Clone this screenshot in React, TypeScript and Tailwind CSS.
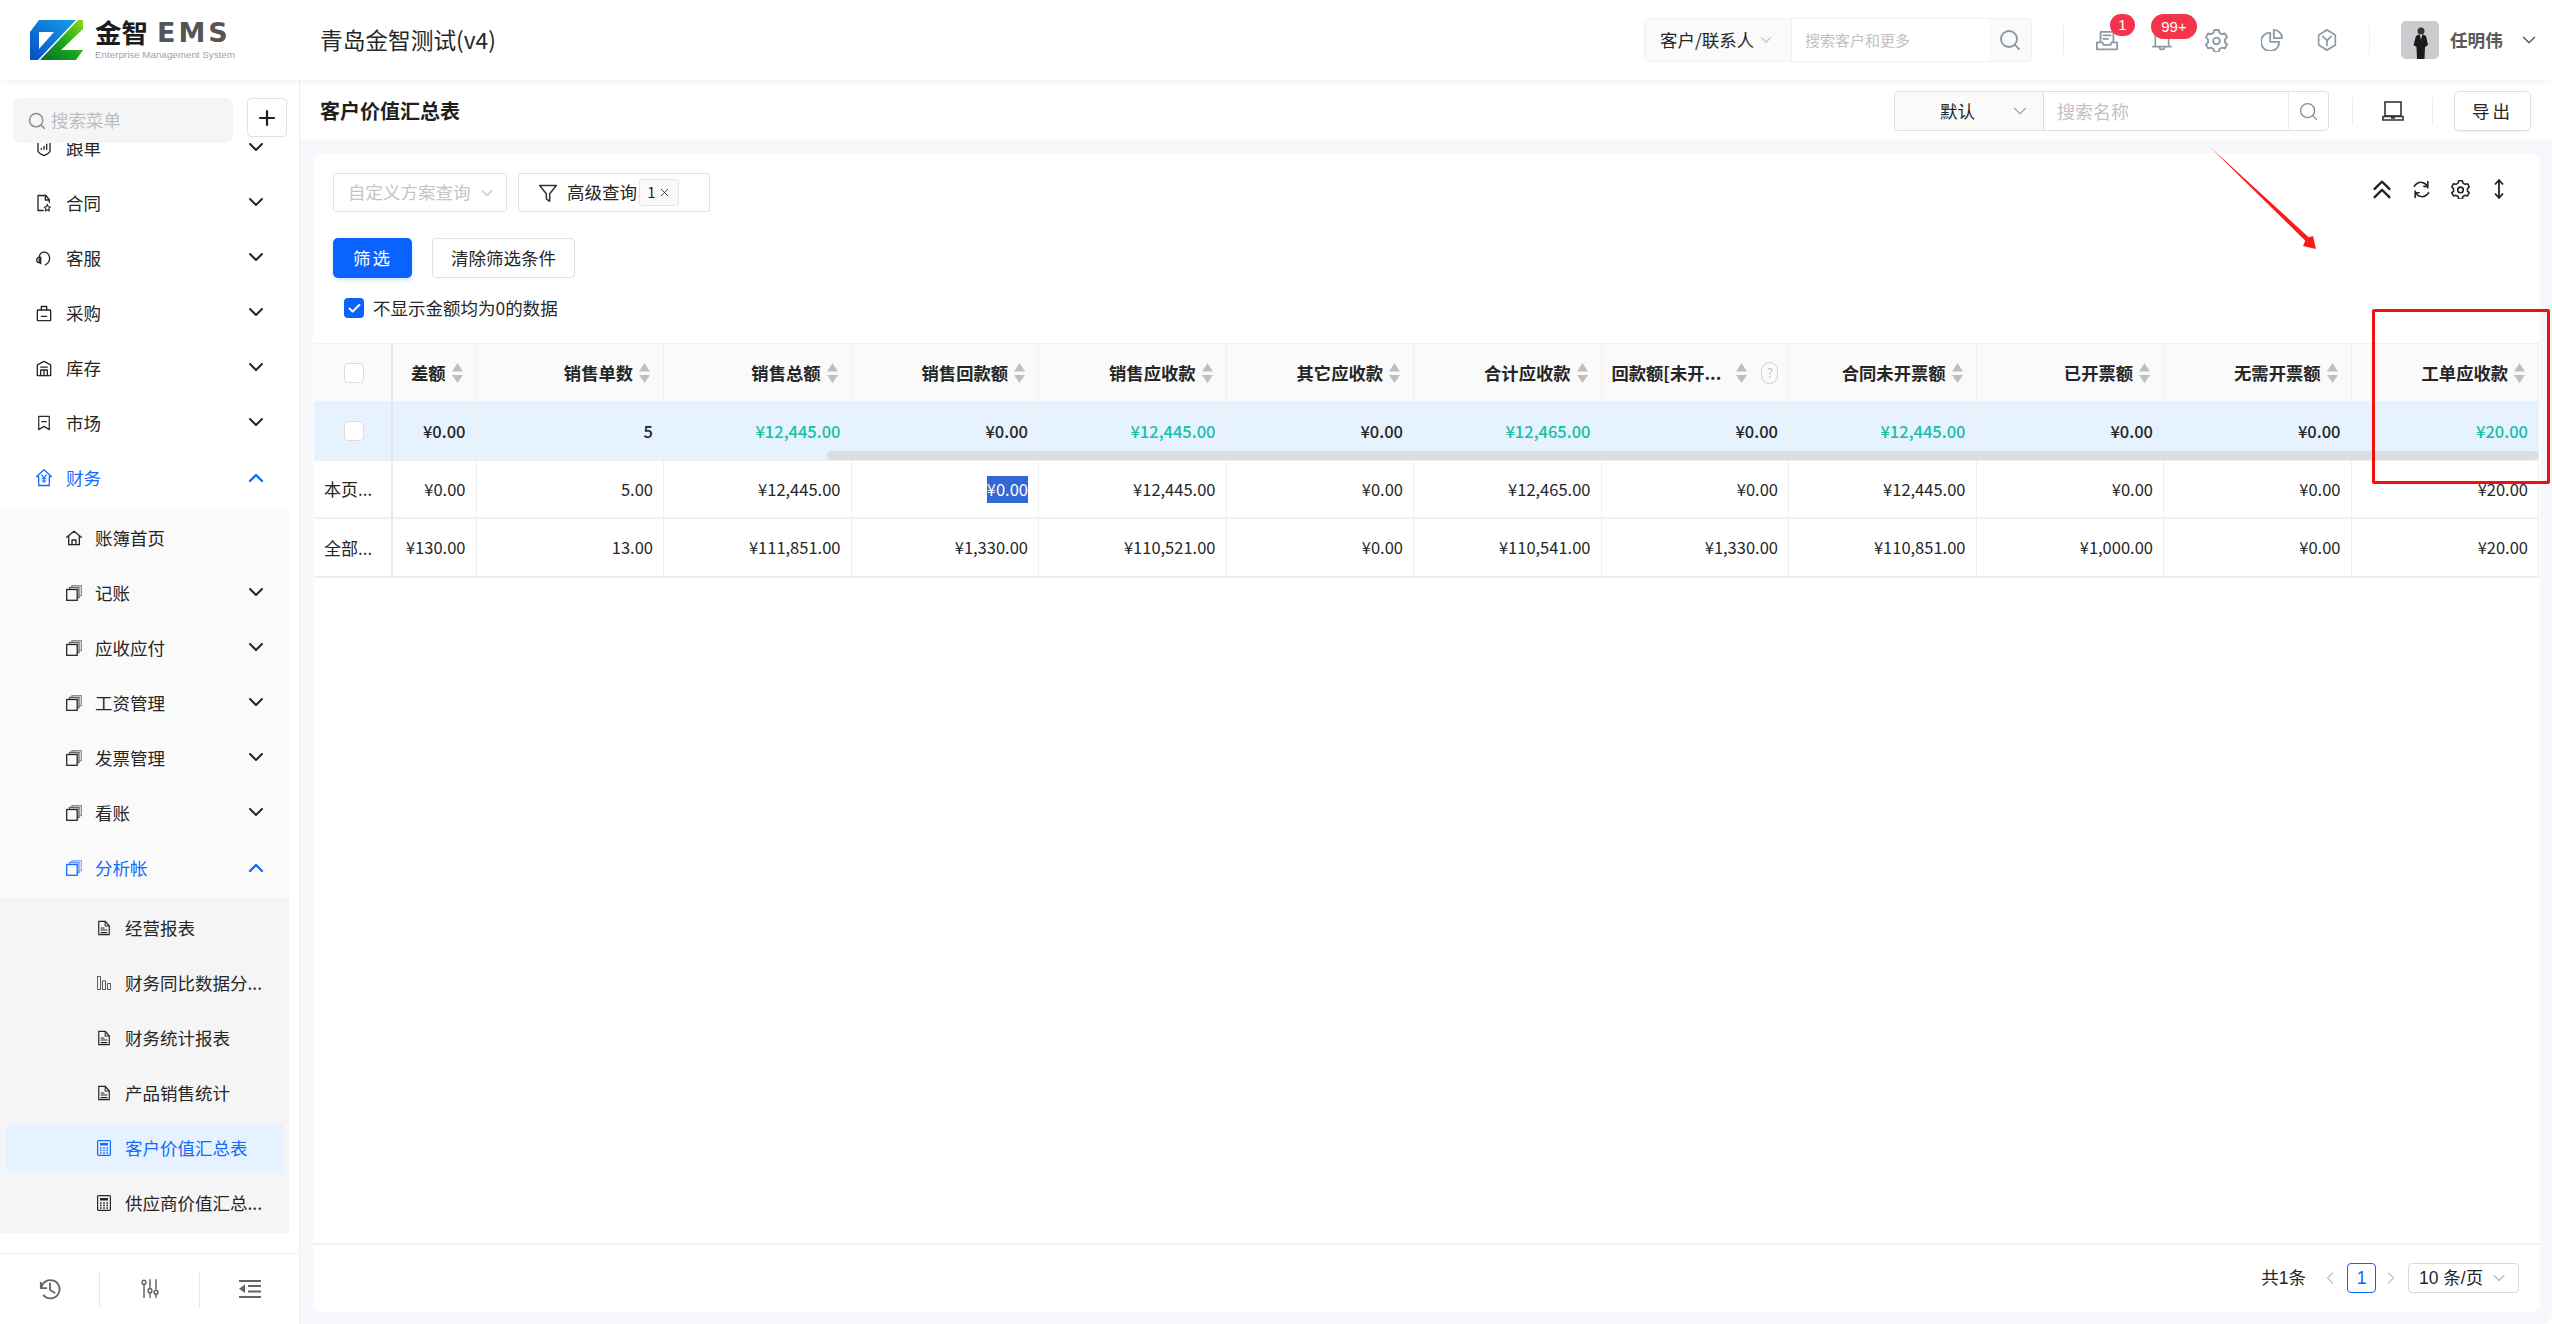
import { ChevronDown, ChevronUp, ChevronLeft, ChevronRight, Search, Plus, X, Check } from "lucide-react";
import type { ReactNode } from "react";

const cjk = "font-['Noto_Sans_CJK_SC','Noto_Sans',sans-serif]";
const rowGrid = "grid grid-cols-[79px_83.5px_repeat(11,187.5px)]";

const Svg = ({ w, h, className, children }: { w: number; h: number; className?: string; children: ReactNode }) => (
  <svg
    width={w}
    height={h}
    viewBox="0 0 24 24"
    fill="none"
    stroke="currentColor"
    strokeWidth="2"
    strokeLinecap="round"
    strokeLinejoin="round"
    preserveAspectRatio="none"
    className={className}
  >
    {children}
  </svg>
);

const TrackIcon = () => (
  <Svg w={16} h={17}>
    <path d="M3 3h18v12c0 3-5 5-9 7-4-2-9-4-9-7z" />
    <path d="M8 13v-1M12 13V9M16 13V6" />
  </Svg>
);
const ContractIcon = () => (
  <Svg w={16} h={18}>
    <path d="M11 22H3V2h12l5 6v3" />
    <path d="M14 2v6h6" />
    <path d="M17 14l1.5 3 3 .5-2.2 2 .6 3-2.9-1.500-2.900 1.500.6-3-2.200-2 3-.5z" strokeWidth="1.600" />
  </Svg>
);
const ServiceIcon = () => (
  <Svg w={16} h={17}>
    <path d="M7 19C3 14 4 3 12 3s10 8 7 14c-1 2-3 3-5 4" />
    <path d="M7 10C3 10 1 12 1 14s2 4 6 4z" />
  </Svg>
);
const BagIcon = () => (
  <Svg w={16} h={17}>
    <rect x="2" y="7" width="20" height="15" rx="1" />
    <path d="M8 7V2h8v5M8 16h8" />
  </Svg>
);
const StoreIcon = () => (
  <Svg w={16} h={17}>
    <path d="M2 22V7l10-5 10 5v15z" />
    <path d="M7 10h10M7 22v-8h10v8M12 14v8" />
  </Svg>
);
const MarketIcon = () => (
  <Svg w={14} h={16}>
    <path d="M3 2h18v20l-9-5-9 5z" />
    <path d="M8 10h8" />
  </Svg>
);
const YenHouseIcon = () => (
  <Svg w={16} h={18}>
    <path d="M1 10L12 1l11 9h-3v12H4V10z" />
    <path d="M8.500 8l3.500 4 3.500-4M12 12v6M9 13h6M9 16h6" strokeWidth="1.600" />
  </Svg>
);
const HomeIcon = () => (
  <Svg w={16} h={16}>
    <path d="M1 11L12 2l11 9M4 9v13h16V9" />
    <path d="M9 22v-7h6v7" />
  </Svg>
);
const StackIcon = () => (
  <svg width={16} height={16} viewBox="0 0 16 16" fill="none" stroke="currentColor" strokeWidth="1.300">
    <rect x="0.700" y="4.500" width="10.500" height="10.800" />
    <path d="M3.500 4V2.500H13v10h-1.500" opacity="0.7" />
    <path d="M6 2V.7h9.300v10H13.500" opacity="0.5" />
  </svg>
);
const ReportIcon = () => (
  <Svg w={14} h={16}>
    <path d="M3 2h11l7 7v13H3z" />
    <path d="M14 2v7h7M7 12h5M7 15h10M7 19h10" strokeWidth="1.800" />
  </Svg>
);
const BarsIcon = () => (
  <svg width={16} height={16} viewBox="0 0 16 16" fill="none" stroke="currentColor" strokeWidth="1.100" opacity="0.75">
    <rect x="0.600" y="0.600" width="3.400" height="14.800" />
    <rect x="6.300" y="5.600" width="3.400" height="9.800" />
    <rect x="12" y="8.600" width="3.400" height="6.800" />
  </svg>
);
const CalcIcon = () => (
  <svg width={14} height={16} viewBox="0 0 14 16" fill="none" stroke="currentColor" strokeWidth="1.200">
    <rect x="0.600" y="0.600" width="12.800" height="14.800" rx="1" />
    <rect x="3" y="3" width="8" height="2.500" fill="currentColor" stroke="none" />
    <path d="M3 8h1.600M6.200 8h1.600M9.400 8H11M3 10.500h1.600M6.200 10.500h1.600M9.400 10.500H11M3 13h1.600M6.200 13h1.600M9.400 13H11" strokeWidth="1.400" />
  </svg>
);
const Logo = () => (
  <svg width={53} height={40} viewBox="0 0 53 40">
    <defs>
      <linearGradient id="lb" x1="0" y1="1" x2="1" y2="0">
        <stop offset="0" stopColor="#0a4fc4" />
        <stop offset="1" stopColor="#12a0e8" />
      </linearGradient>
      <linearGradient id="lg" x1="0" y1="1" x2="1" y2="0">
        <stop offset="0" stopColor="#066b2a" />
        <stop offset="0.500" stopColor="#19a81f" />
        <stop offset="1" stopColor="#8fd51e" />
      </linearGradient>
    </defs>
    <path d="M9 0h37L8 40H0V12z" fill="url(#lb)" />
    <path d="M9 12h15L9 29z" fill="#fff" />
    <path d="M53 0v9L31 30h22l-7 10H10L48 0z" fill="url(#lg)" />
  </svg>
);

const SortIcon = () => (
  <svg width={11} height={22} viewBox="0 0 11 22" className="shrink-0">
    <path d="M5.500 1L11 9.500H0z" fill="#bfbfbf" />
    <path d="M5.500 21L0 13h11z" fill="#bfbfbf" />
  </svg>
);

const GearPath = () => (
  <>
    <path d="M9.700 2h4.600l.8 3 2.700 1.500 3-.8 2.200 4-2.200 2.300v3l2.200 2.200-2.200 4-3-.8-2.700 1.500-.8 3H9.700l-.8-3-2.700-1.500-3 .8-2.200-4L3.200 15v-3L1 9.700l2.200-4 3 .8L8.900 5z" transform="translate(0 -1)" />
    <circle cx="12" cy="12.500" r="3.500" />
  </>
);

type SubItem = { label: string; icon: ReactNode; active?: boolean };

const topItems = [
  { label: "跟单", icon: <TrackIcon /> },
  { label: "合同", icon: <ContractIcon /> },
  { label: "客服", icon: <ServiceIcon /> },
  { label: "采购", icon: <BagIcon /> },
  { label: "库存", icon: <StoreIcon /> },
  { label: "市场", icon: <MarketIcon /> },
];

const financeItems = ["记账", "应收应付", "工资管理", "发票管理", "看账"];

const reportItems: SubItem[] = [
  { label: "经营报表", icon: <ReportIcon /> },
  { label: "财务同比数据分...", icon: <BarsIcon /> },
  { label: "财务统计报表", icon: <ReportIcon /> },
  { label: "产品销售统计", icon: <ReportIcon /> },
  { label: "客户价值汇总表", icon: <CalcIcon />, active: true },
  { label: "供应商价值汇总...", icon: <CalcIcon /> },
];

const columns = [
  "差额",
  "销售单数",
  "销售总额",
  "销售回款额",
  "销售应收款",
  "其它应收款",
  "合计应收款",
  "回款额[未开...",
  "合同未开票额",
  "已开票额",
  "无需开票额",
  "工单应收款",
];

const row1 = ["¥0.00", "5", "¥12,445.00", "¥0.00", "¥12,445.00", "¥0.00", "¥12,465.00", "¥0.00", "¥12,445.00", "¥0.00", "¥0.00", "¥20.00"];
const green = [2, 4, 6, 8, 11];
const row2 = ["¥0.00", "5.00", "¥12,445.00", "¥0.00", "¥12,445.00", "¥0.00", "¥12,465.00", "¥0.00", "¥12,445.00", "¥0.00", "¥0.00", "¥20.00"];
const row3 = ["¥130.00", "13.00", "¥111,851.00", "¥1,330.00", "¥110,521.00", "¥0.00", "¥110,541.00", "¥1,330.00", "¥110,851.00", "¥1,000.00", "¥0.00", "¥20.00"];

const Box = () => <div className="w-[20px] h-[20px] rounded-[4px] bg-white border border-[#dcdcdc]" />;

const TopBar = () => (
  <header className="h-[80px] shrink-0 bg-white flex items-center pr-[15px] shadow-[0_2px_5px_rgba(0,0,0,0.05)] relative z-10">
    <div className="w-[320px] shrink-0 pl-[30px] flex items-center gap-[12px]">
      <Logo />
      <div className="flex flex-col">
        <div className="flex items-center h-[26px] text-[26.500px] font-bold leading-none whitespace-nowrap">
          <span className="text-[#1c1c1c]">金智</span>
          <span className="text-[#555] ml-[9px] font-['DejaVu_Sans',sans-serif] text-[27px] tracking-[3px]">EMS</span>
        </div>
        <span className="text-[9.800px] leading-[12px] mt-[4px] text-[#a3a3a3] whitespace-nowrap font-['Liberation_Sans',sans-serif]">
          Enterprise Management System
        </span>
      </div>
    </div>
    <div className="text-[22.700px] text-[#262626]">青岛金智测试(v4)</div>

    <div className="ml-auto flex items-center">
      <div className="flex h-[44px] w-[388px] border border-[#f0f0f0] rounded-[3px] overflow-hidden">
        <div className="w-[147px] bg-[#fafafa] border-r border-[#f0f0f0] flex items-center pl-[15px] text-[17.500px] text-[#262626]">
          <span>客户/联系人</span>
          <ChevronDown size={18} strokeWidth={1.500} className="ml-[3px] text-[#c4c4c4]" />
        </div>
        <div className="flex-1 flex items-center pl-[13px] text-[15px] text-[#c2c2c2]">搜索客户和更多</div>
        <div className="w-[42px] bg-[#fafafa] flex items-center justify-center text-[#8a96a0]">
          <Search size={24} strokeWidth={1.800} />
        </div>
      </div>
      <div className="w-px h-[30px] bg-[#eeeeee] ml-[31px] mr-[15px]" />
      <div className="w-[55px] flex justify-center relative text-[#8e9ba6]">
        <Svg w={22} h={21}>
          <path d="M5 13V2h14v11" />
          <path d="M8 6h8M8 10h5" />
          <path d="M1 14h6l1 3h8l1-3h6v8H1z" />
        </Svg>
        <span className="absolute left-[31px] top-[-16px] w-[25px] h-[22px] rounded-full bg-[#f5334a] text-white text-[15px] leading-[22px] text-center font-['Liberation_Sans',sans-serif]">
          1
        </span>
      </div>
      <div className="w-[55px] flex justify-center relative text-[#8e9ba6]">
        <Svg w={20} h={21}>
          <path d="M4 18V6a8 5 0 0 1 16 0v12M1 19h22M9 20c0 3 6 3 6 0" />
        </Svg>
        <span className="absolute left-[17px] top-[-16px] w-[46px] h-[25px] rounded-full bg-[#f5334a] text-white text-[15px] leading-[25px] text-center font-['Liberation_Sans',sans-serif]">
          99+
        </span>
      </div>
      <div className="w-[55px] flex justify-center text-[#8e9ba6]">
        <svg width={23} height={23} viewBox="0 0 24 24" fill="none" stroke="currentColor" strokeWidth="2" strokeLinejoin="round">
          <GearPath />
        </svg>
      </div>
      <div className="w-[55px] flex justify-center text-[#8e9ba6]">
        <Svg w={22} h={22}>
          <path d="M10 4a10 10 0 1 0 10 10H10z" />
          <path d="M14 1a9 9 0 0 1 9 9h-9z" />
        </Svg>
      </div>
      <div className="w-[55px] flex justify-center text-[#8e9ba6]">
        <Svg w={20} h={22}>
          <path d="M12 1l10 5.500v11L12 23 2 17.500v-11z" />
          <path d="M7 8l5 4.500L17 8M12 12.500V18" />
        </Svg>
      </div>
      <div className="w-px h-[30px] bg-[#eeeeee] ml-[15px] mr-[31px]" />
      <svg width={38} height={38} viewBox="0 0 38 38" className="rounded-[5px] shrink-0">
        <rect width="38" height="38" fill="#c9cbcf" />
        <circle cx="20" cy="10" r="3.500" fill="#3a302c" />
        <path d="M15 15l3-1.500h4l3 1.500 2 9-3 2-.5 12H16l-.5-12-3-2z" fill="#1a1a1d" />
        <path d="M18.800 13.500h2.400l-1.200 5z" fill="#e8e8e8" />
      </svg>
      <span className="w-[53px] ml-[11px] text-[17.600px] font-bold text-[#595959] whitespace-nowrap">任明伟</span>
      <ChevronDown size={22} strokeWidth={1.500} className="ml-[15px] -mr-[3px] text-[#4a5a6a]" />
    </div>
  </header>
);

const Sidebar = () => (
  <aside className="w-[300px] shrink-0 bg-white border-r border-[#eeeff2] flex flex-col text-[17.500px] text-[#262626]">
    <div className="h-[63px] shrink-0 flex items-start pt-[18px] pl-[13px] relative z-[1]">
      <div className="w-[220px] h-[45px] rounded-[8px] bg-[#f4f5f7] flex items-center pl-[14px] gap-[4px] text-[#bdbdbd]">
        <Search size={20} strokeWidth={1.800} className="text-[#8f8f8f]" />
        <span>搜索菜单</span>
      </div>
      <div className="w-[40px] h-[39px] ml-[14px] rounded-[4px] border border-[#e2e2e2] flex items-center justify-center text-[#222]">
        <Plus size={24} strokeWidth={2.200} />
      </div>
    </div>
    <nav className="flex-1 min-h-0 overflow-hidden pr-[10px]">
      <div className="-mt-[22.500px]">
        {topItems.map((it) => (
          <div key={it.label} className="h-[55px] flex items-center pl-[36px] pr-[21px]">
            <span className="w-[16px] flex justify-center mr-[14px]">{it.icon}</span>
            <span className="flex-1">{it.label}</span>
            <ChevronDown size={24} strokeWidth={2} className="mb-[3px]" />
          </div>
        ))}
        <div className="h-[55px] flex items-center pl-[36px] pr-[21px] text-[#1469ff]">
          <span className="w-[16px] flex justify-center mr-[14px]">
            <YenHouseIcon />
          </span>
          <span className="flex-1">财务</span>
          <ChevronUp size={24} strokeWidth={2.400} />
        </div>
        <div className="bg-[#fafafa] mt-[2.500px] pt-[2.500px]">
          <div className="h-[55px] flex items-center pl-[66px]">
            <span className="w-[16px] mr-[13px]">
              <HomeIcon />
            </span>
            账簿首页
          </div>
          {financeItems.map((label) => (
            <div key={label} className="h-[55px] flex items-center pl-[66px] pr-[21px]">
              <span className="w-[16px] mr-[13px]">
                <StackIcon />
              </span>
              <span className="flex-1">{label}</span>
              <ChevronDown size={24} strokeWidth={2} className="mb-[3px]" />
            </div>
          ))}
          <div className="h-[55px] flex items-center pl-[66px] pr-[21px] text-[#1469ff]">
            <span className="w-[16px] mr-[13px]">
              <StackIcon />
            </span>
            <span className="flex-1">分析帐</span>
            <ChevronUp size={24} strokeWidth={2.400} />
          </div>
          <div className="bg-[#f5f5f5] py-[2.500px] mt-[2.500px]">
            {reportItems.map((it) => (
              <div key={it.label} className="h-[55px] py-[2.500px] px-[5px]">
                <div
                  className={
                    it.active
                      ? "h-[50px] rounded-[6px] bg-[#e6f2ff] text-[#1469ff] flex items-center pl-[92px]"
                      : "h-[50px] flex items-center pl-[92px]"
                  }
                >
                  <span className="w-[14px] mr-[14px] flex justify-center">{it.icon}</span>
                  <span className="whitespace-nowrap">{it.label}</span>
                </div>
              </div>
            ))}
          </div>
        </div>
      </div>
    </nav>
    <div className="h-[71px] shrink-0 border-t border-[#eeeeee] flex items-center text-[#666]">
      <div className="w-[100px] h-[37px] border-r border-[#e6e6e6] flex items-center justify-center">
        <Svg w={22} h={22}>
          <path d="M2 5v6h6" />
          <path d="M2.500 11A10 10 0 1 1 5 19" />
          <path d="M12 6v7l5 3" />
        </Svg>
      </div>
      <div className="w-[100px] h-[37px] border-r border-[#e6e6e6] flex items-center justify-center">
        <Svg w={18} h={20}>
          <path d="M4 7v15M12 1v9M12 17v5M20 1v11M20 19v3" />
          <circle cx="4" cy="4" r="2.500" />
          <circle cx="12" cy="14" r="2.500" />
          <circle cx="20" cy="16" r="2.500" />
        </Svg>
      </div>
      <div className="w-[99px] flex items-center justify-center">
        <svg width={22} height={18} viewBox="0 0 22 18" fill="currentColor">
          <rect x="0" y="0" width="22" height="2" />
          <rect x="9" y="5" width="13" height="2" />
          <rect x="9" y="10.500" width="13" height="2" />
          <rect x="0" y="16" width="22" height="2" />
          <path d="M0 8.700L6 4.500v8.500z" />
        </svg>
      </div>
    </div>
  </aside>
);

const DataTable = () => (
  <div className="relative w-[2225px] mx-[1px] text-[16.500px] text-[#262626]">
    <div className={`${rowGrid} h-[59px] bg-[#fafafa] border-t border-b border-[#f0f0f0] font-bold text-[17.300px]`}>
      <div className="flex items-center justify-center border-r-2 border-[#e8e8e8] pl-[2px]">
        <Box />
      </div>
      {columns.map((c, i) => (
        <div
          key={c}
          className={
            i === 7
              ? "flex items-center pl-[10px] border-r border-[#f0f0f0]"
              : "flex items-center justify-end pr-[13px] gap-[6px] border-r border-[#f0f0f0]"
          }
        >
          <span className="whitespace-nowrap">{c}</span>
          {i === 7 ? (
            <>
              <span className="ml-[15px]">
                <SortIcon />
              </span>
              <span className="ml-[14px] w-[17px] h-[22px] rounded-full border border-[#cfcfcf] text-[#bfbfbf] text-[13px] leading-[20px] text-center font-normal">
                ?
              </span>
            </>
          ) : (
            <SortIcon />
          )}
        </div>
      ))}
    </div>
    <div className={`${rowGrid} h-[59px] bg-[#e6f2fd] border-b border-[#f0f0f0] font-medium`}>
      <div className="flex items-center justify-center border-r-2 border-[#e0e6ec] pl-[2px]">
        <Box />
      </div>
      {row1.map((v, i) => (
        <div key={i} className="flex items-center justify-end pr-[10px] border-r border-[#eef2f6]">
          <span className={green.includes(i) ? "text-[#17bfa8]" : ""}>{v}</span>
        </div>
      ))}
    </div>
    <div className={`${rowGrid} h-[58px] border-b-2 border-[#f0f0f0]`}>
      <div className="flex items-center pl-[10px] text-[17px] border-r-2 border-[#e8e8e8]">本页...</div>
      {row2.map((v, i) => (
        <div key={i} className="flex items-center justify-end pr-[10px] border-r border-[#f0f0f0]">
          <span className={i === 3 ? "bg-[#3367d6] text-white leading-[27px]" : ""}>{v}</span>
        </div>
      ))}
    </div>
    <div className={`${rowGrid} h-[59px] border-b-2 border-[#f0f0f0]`}>
      <div className="flex items-center pl-[10px] text-[17px] border-r-2 border-[#e8e8e8]">全部...</div>
      {row3.map((v, i) => (
        <div key={i} className="flex items-center justify-end pr-[10px] border-r border-[#f0f0f0]">
          {v}
        </div>
      ))}
    </div>
    <div className="absolute left-[513px] right-0 top-[108px] h-[9px] rounded-full bg-[#dedede]" />
  </div>
);

const Main = () => (
  <main className="flex-1 min-w-0 flex flex-col bg-[#f7f8fc]">
    <div className="h-[60px] shrink-0 bg-white flex items-center pl-[20px] pr-[21px] pt-[2px]">
      <div className="text-[20px] font-bold text-[#1f1f1f]">客户价值汇总表</div>
      <div className="ml-auto flex items-center">
        <div className="flex h-[40px] w-[435px] border border-[#dedede] rounded-[4px] overflow-hidden">
          <div className="w-[149px] bg-[#fafafa] border-r border-[#dedede] flex items-center pl-[45px] text-[17.500px] text-[#262626]">
            <span>默认</span>
            <ChevronDown size={22} strokeWidth={1.300} className="ml-[34px] text-[#a8a8a8]" />
          </div>
          <div className="w-[245px] flex items-center pl-[13px] text-[18px] text-[#c2c2c2] border-r border-[#ececec]">搜索名称</div>
          <div className="flex-1 flex items-center justify-center text-[#8c8c8c]">
            <Search size={21} strokeWidth={1.500} />
          </div>
        </div>
        <div className="w-px h-[28px] bg-[#eeeeee] ml-[23px]" />
        <div className="w-[79px] flex justify-center text-[#333]">
          <svg width={22} height={20} viewBox="0 0 22 20" fill="none" stroke="currentColor" strokeWidth="1.600">
            <rect x="3" y="1" width="16" height="14" />
            <path d="M1 15.500h20v3.500H1zM9 17h4" />
          </svg>
        </div>
        <div className="w-px h-[28px] bg-[#eeeeee] mr-[21px]" />
        <div className="w-[77px] h-[40px] rounded-[5px] border border-[#dedede] shadow-[0_1px_2px_rgba(0,0,0,0.06)] flex items-center justify-center text-[17.500px] tracking-[3px] text-[#262626]">
          导出
        </div>
      </div>
    </div>

    <div className="flex-1 min-h-0 pt-[13px] pl-[13px] pr-[12px] pb-[12px]">
      <div className="h-full bg-white rounded-[10px] flex flex-col">
        <div className="pt-[20px] pl-[20px] pr-[35px] text-[17.500px] text-[#262626]">
          <div className="flex items-start">
            <div className="w-[174px] h-[39px] rounded-[3px] border border-[#e2e2e2] flex items-center pl-[14px] text-[#c4c4c4] whitespace-nowrap">
              自定义方案查询
              <ChevronDown size={20} strokeWidth={1.400} className="ml-[6px]" />
            </div>
            <div className="w-[192px] h-[39px] ml-[11px] rounded-[3px] border border-[#e2e2e2] flex items-center pl-[19px]">
              <svg width={20} height={20} viewBox="0 0 24 24" fill="none" stroke="#333" strokeWidth="1.800" strokeLinejoin="round">
                <path d="M2 3h20l-8 10v9l-4-3v-6z" />
              </svg>
              <span className="ml-[9px]">高级查询</span>
              <span className="ml-[2px] w-[40px] h-[27px] rounded-[3px] border border-[#e4e4e4] bg-[#fafafa] flex items-center justify-center text-[15px] gap-[2px]">
                1
                <X size={13} strokeWidth={1.500} />
              </span>
            </div>
            <div className="ml-auto flex items-center gap-[20px] mt-[5px] text-[#222]">
              <Svg w={20} h={22}>
                <path d="M3 12l9-8 9 8M3 21l9-8 9 8" strokeWidth="2.600" />
              </Svg>
              <Svg w={19} h={19}>
                <path d="M20 10A9 9 0 0 0 5 5.500L3 8M4 14a9 9 0 0 0 15 4.500l2-2.500" />
                <path d="M20 2v6h-5M4 22v-6h5" />
              </Svg>
              <svg width={19} height={19} viewBox="0 0 24 24" fill="none" stroke="currentColor" strokeWidth="2" strokeLinejoin="round">
                <GearPath />
              </svg>
              <svg width={12} height={22} viewBox="0 0 12 22" fill="none" stroke="currentColor" strokeWidth="1.800" className="ml-[3px]">
                <path d="M6 3v16M2 6.500L6 2l4 4.500M2 15.500L6 20l4-4.500" />
              </svg>
            </div>
          </div>
          <div className="flex items-center mt-[26px]">
            <div className="w-[79px] h-[40px] rounded-[5px] bg-[#0a63fe] text-white tracking-[2px] flex items-center justify-center shadow-[0_2px_4px_rgba(10,99,254,0.2)]">
              筛选
            </div>
            <div className="w-[143px] h-[40px] ml-[20px] rounded-[4px] border border-[#e0e0e0] flex items-center justify-center">
              清除筛选条件
            </div>
          </div>
          <div className="flex items-center h-[20px] mt-[20px] pl-[11px]">
            <span className="w-[20px] h-[20px] rounded-[4px] bg-[#0a63fe] flex items-center justify-center text-white">
              <Check size={15} strokeWidth={3} />
            </span>
            <span className="ml-[9px]">不显示金额均为0的数据</span>
          </div>
        </div>

        <div className="mt-[25px]">
          <DataTable />
        </div>

        <div className="mt-auto h-[69px] border-t-2 border-[#f2f2f2] flex items-center justify-end pr-[21px] pb-[1px] font-['Liberation_Sans','Noto_Sans_CJK_SC',sans-serif] text-[17.500px] text-[#262626]">
          <span>共1条</span>
          <ChevronLeft size={20} strokeWidth={1.500} className="ml-[14px] text-[#c4c4c4]" />
          <span className="ml-[7px] w-[29px] h-[30px] rounded-[4px] border border-[#0a63fe] text-[#0a63fe] flex items-center justify-center">1</span>
          <ChevronRight size={20} strokeWidth={1.500} className="ml-[5px] text-[#c4c4c4]" />
          <div className="ml-[7px] w-[111px] h-[30px] rounded-[4px] border border-[#d9d9d9] flex items-center pl-[10px]">
            <span className="whitespace-nowrap">10 条/页</span>
            <ChevronDown size={20} strokeWidth={1.300} className="ml-[6px] text-[#b5b5b5]" />
          </div>
        </div>
      </div>
    </div>
  </main>
);

export default function App() {
  return (
    <div className={`relative w-[2552px] h-[1324px] overflow-hidden rounded-[12px] bg-white flex flex-col ${cjk}`}>
      <TopBar />
      <div className="flex-1 min-h-0 flex">
        <Sidebar />
        <Main />
      </div>

      {/* annotation drawn over the screenshot */}
      <div className="absolute left-[2372px] top-[309px] w-[178px] h-[175px] border-[3px] border-[#f40f0f] rounded-[2px]" />
      <svg width={130} height={120} viewBox="0 0 130 120" className="absolute left-[2200px] top-[140px]">
        <path d="M9 6L105.300 100.800 103 106 116 109 113 96 108.700 97.200z" fill="#fb1a1a" />
      </svg>
    </div>
  );
}
